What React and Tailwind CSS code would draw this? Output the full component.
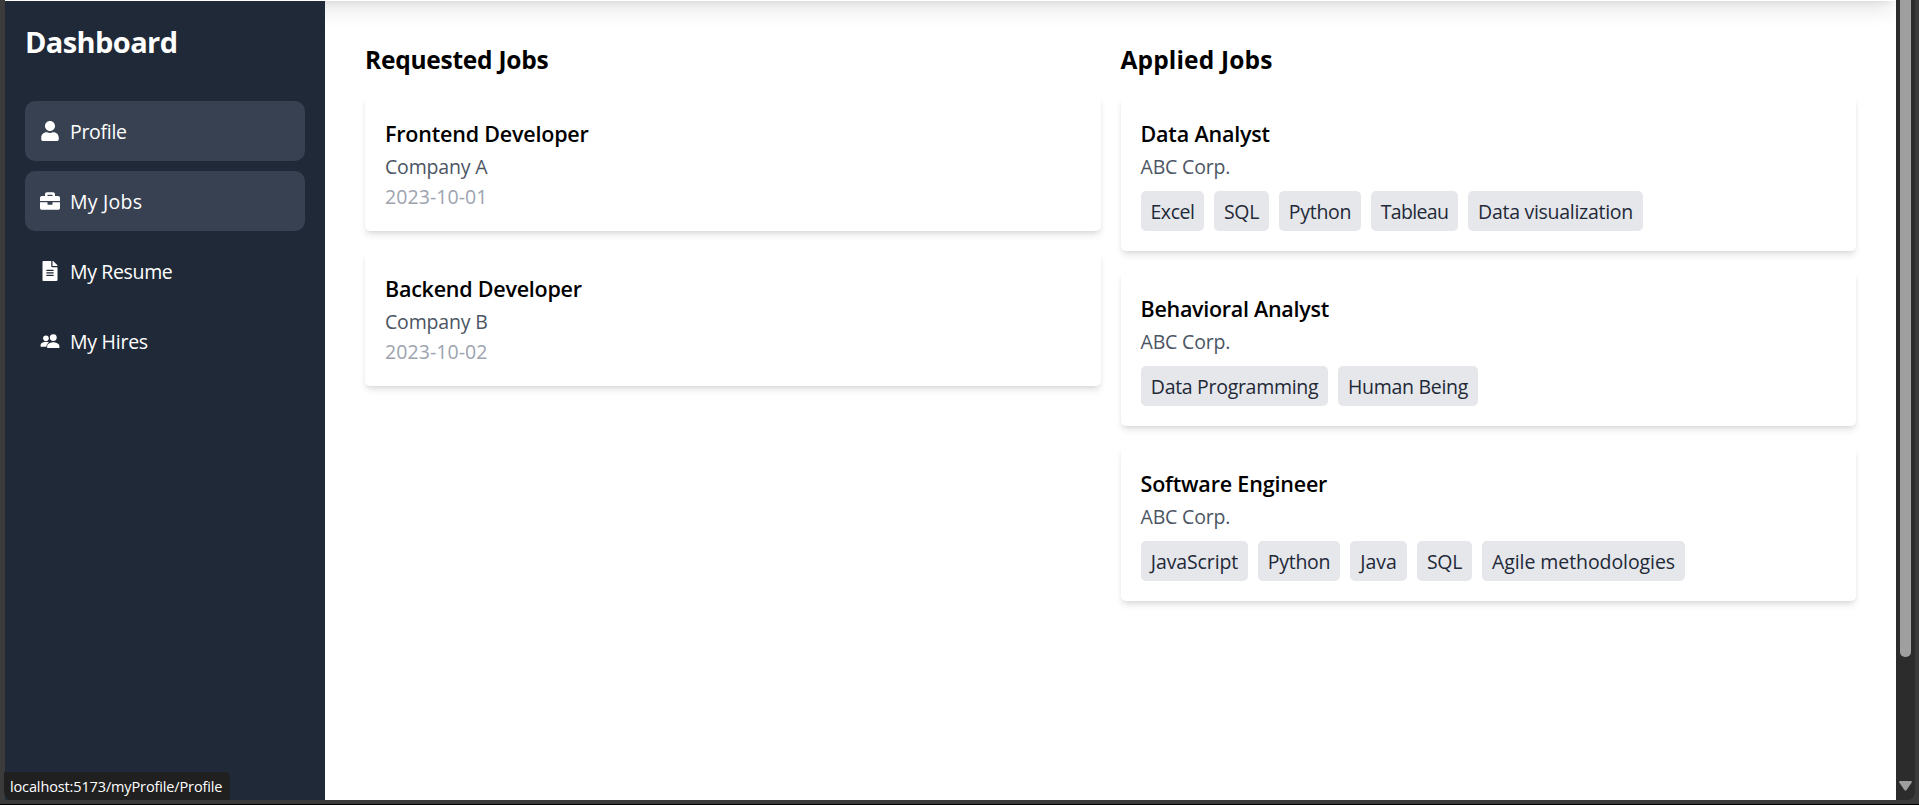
import { FaUser, FaBriefcase, FaFileAlt } from "react-icons/fa";
import { IoPeopleSharp } from "react-icons/io5";

const links = [
  { label: "Profile", Icon: FaUser, active: true, track: "tracking-[-0.3px]" },
  { label: "My Jobs", Icon: FaBriefcase, active: true, track: "tracking-[0.25px]" },
  { label: "My Resume", Icon: FaFileAlt, active: false, track: "tracking-[-0.35px]" },
  { label: "My Hires", Icon: IoPeopleSharp, active: false, track: "tracking-[-0.25px]" },
];

const requested = [
  { title: "Frontend Developer", track: "tracking-[-0.2px]", company: "Company A", date: "2023-10-01" },
  { title: "Backend Developer", track: "tracking-[-0.24px]", company: "Company B", date: "2023-10-02" },
];

const applied = [
  {
    title: "Data Analyst",
    track: "tracking-[-0.18px]",
    company: "ABC Corp.",
    skills: [
      ["Excel", "w-[63px] tracking-[-0.45px]"],
      ["SQL", "w-[55px] tracking-[-0.3px]"],
      ["Python", "w-[82px] tracking-[-0.3px]"],
      ["Tableau", "w-[87px] tracking-[-0.65px]"],
      ["Data visualization", "w-[175px] tracking-[-0.28px]"],
    ],
  },
  {
    title: "Behavioral Analyst",
    track: "tracking-[-0.28px]",
    company: "ABC Corp.",
    skills: [
      ["Data Programming", "w-[187px] tracking-[-0.3px]"],
      ["Human Being", "w-[140px] tracking-[-0.3px]"],
    ],
  },
  {
    title: "Software Engineer",
    track: "tracking-[-0.18px]",
    company: "ABC Corp.",
    skills: [
      ["JavaScript", "w-[107px] tracking-[-0.1px]"],
      ["Python", "w-[82px] tracking-[-0.3px]"],
      ["Java", "w-[57px]"],
      ["SQL", "w-[55px] tracking-[-0.3px]"],
      ["Agile methodologies", "w-[203px] tracking-[-0.08px]"],
    ],
  },
];

function Card({ title, track, company, children }) {
  return (
    <article className="rounded-[5px] bg-white p-5 shadow-[0_5px_7.5px_-1.25px_rgba(0,0,0,0.1),0_2.5px_5px_-2.5px_rgba(0,0,0,0.1)]">
      <h3 className={`text-[21.5px] leading-[35px] font-semibold text-black ${track}`}>{title}</h3>
      <p className="h-[30px] pt-px tracking-[-0.18px] text-[#4b5563]">{company}</p>
      {children}
    </article>
  );
}

function Sidebar() {
  return (
    <aside className="relative z-10 w-80 shrink-0 bg-[#1f2937] p-5 text-white">
      <h1 className="mb-10 h-10 pt-px text-[29px] leading-10 font-bold tracking-[-0.6px]">Dashboard</h1>
      <nav className="flex flex-col gap-2.5">
        {links.map(({ label, Icon, active, track }) => (
          <a
            key={label}
            className={`flex h-[60px] items-center gap-2.5 rounded-[10px] px-[15px] ${active ? "bg-[#374151]" : ""}`}
          >
            <Icon className="size-5" />
            <span className={`pt-px ${track}`}>{label}</span>
          </a>
        ))}
      </nav>
    </aside>
  );
}

function Scrollbar() {
  return (
    <div className="flex w-[23px] shrink-0 bg-[#3b3b3b]">
      <div className="flex w-[19px] flex-col items-center justify-between rounded-br-[8px] bg-[#2c2c2c] pr-px pb-[9px]">
        <div className="h-[657px] w-[11px] rounded-b-[5px] bg-[#9f9f9f]" />
        <svg viewBox="0 0 13 10" className="h-2.5 w-[13px]" fill="#9f9f9f">
          <path d="M1 0h11q1.2.4.7 1.4L7.6 9q-1.1 1.3-2.2 0L.3 1.400Q-.2.4 1 0z" />
        </svg>
      </div>
    </div>
  );
}

export default function App() {
  return (
    <div className="flex h-[805px] w-[1919px] flex-col overflow-hidden border-b border-black bg-[#3b3b3b] font-['Open_Sans','Noto_Sans',sans-serif] text-[19.5px] leading-[30px]">
      <div className="flex h-[800px] shrink-0 pl-[5px]">
        <div className="flex min-w-0 grow flex-col overflow-hidden bg-white">
          <header className="relative z-[5] -mt-[79px] h-20 shrink-0 bg-white shadow-[0_12.5px_18.75px_-3.75px_rgba(0,0,0,0.1),0_5px_7.5px_-5px_rgba(0,0,0,0.1)]" />
          <div className="flex grow">
            <Sidebar />
            <main className="grid grow grid-cols-2 items-start gap-5 p-10">
              <section className="flex flex-col gap-5">
                <h2 className="h-[35px] pt-px text-[24.5px] leading-[35px] font-bold tracking-[-0.25px]">Requested Jobs</h2>
                {requested.map((job) => (
                  <Card key={job.title} {...job}>
                    <p className="h-[30px] pt-px tracking-[0.07px] text-[#9ca3af]">{job.date}</p>
                  </Card>
                ))}
              </section>
              <section className="flex flex-col gap-5">
                <h2 className="h-[35px] pt-px text-[24.5px] leading-[35px] font-bold tracking-[0.15px]">Applied Jobs</h2>
                {applied.map((job) => (
                  <Card key={job.title} {...job}>
                    <ul className="mt-2.5 flex gap-2.5">
                      {job.skills.map(([name, size]) => (
                        <li
                          key={name}
                          className={`h-10 rounded-[5px] bg-[#e5e7eb] pt-[6px] pl-px text-center whitespace-nowrap text-[#1f2937] ${size}`}
                        >
                          {name}
                        </li>
                      ))}
                    </ul>
                  </Card>
                ))}
              </section>
            </main>
          </div>
        </div>
        <Scrollbar />
      </div>
      <div className="absolute top-[772px] left-1 z-20 h-7 w-[226px] rounded-tr-[5px] rounded-bl-[8px] bg-[#202020] pt-px pl-1.5 text-[14.5px] leading-7 tracking-[-0.13px] whitespace-nowrap text-white">
        localhost:5173/myProfile/Profile
      </div>
    </div>
  );
}
